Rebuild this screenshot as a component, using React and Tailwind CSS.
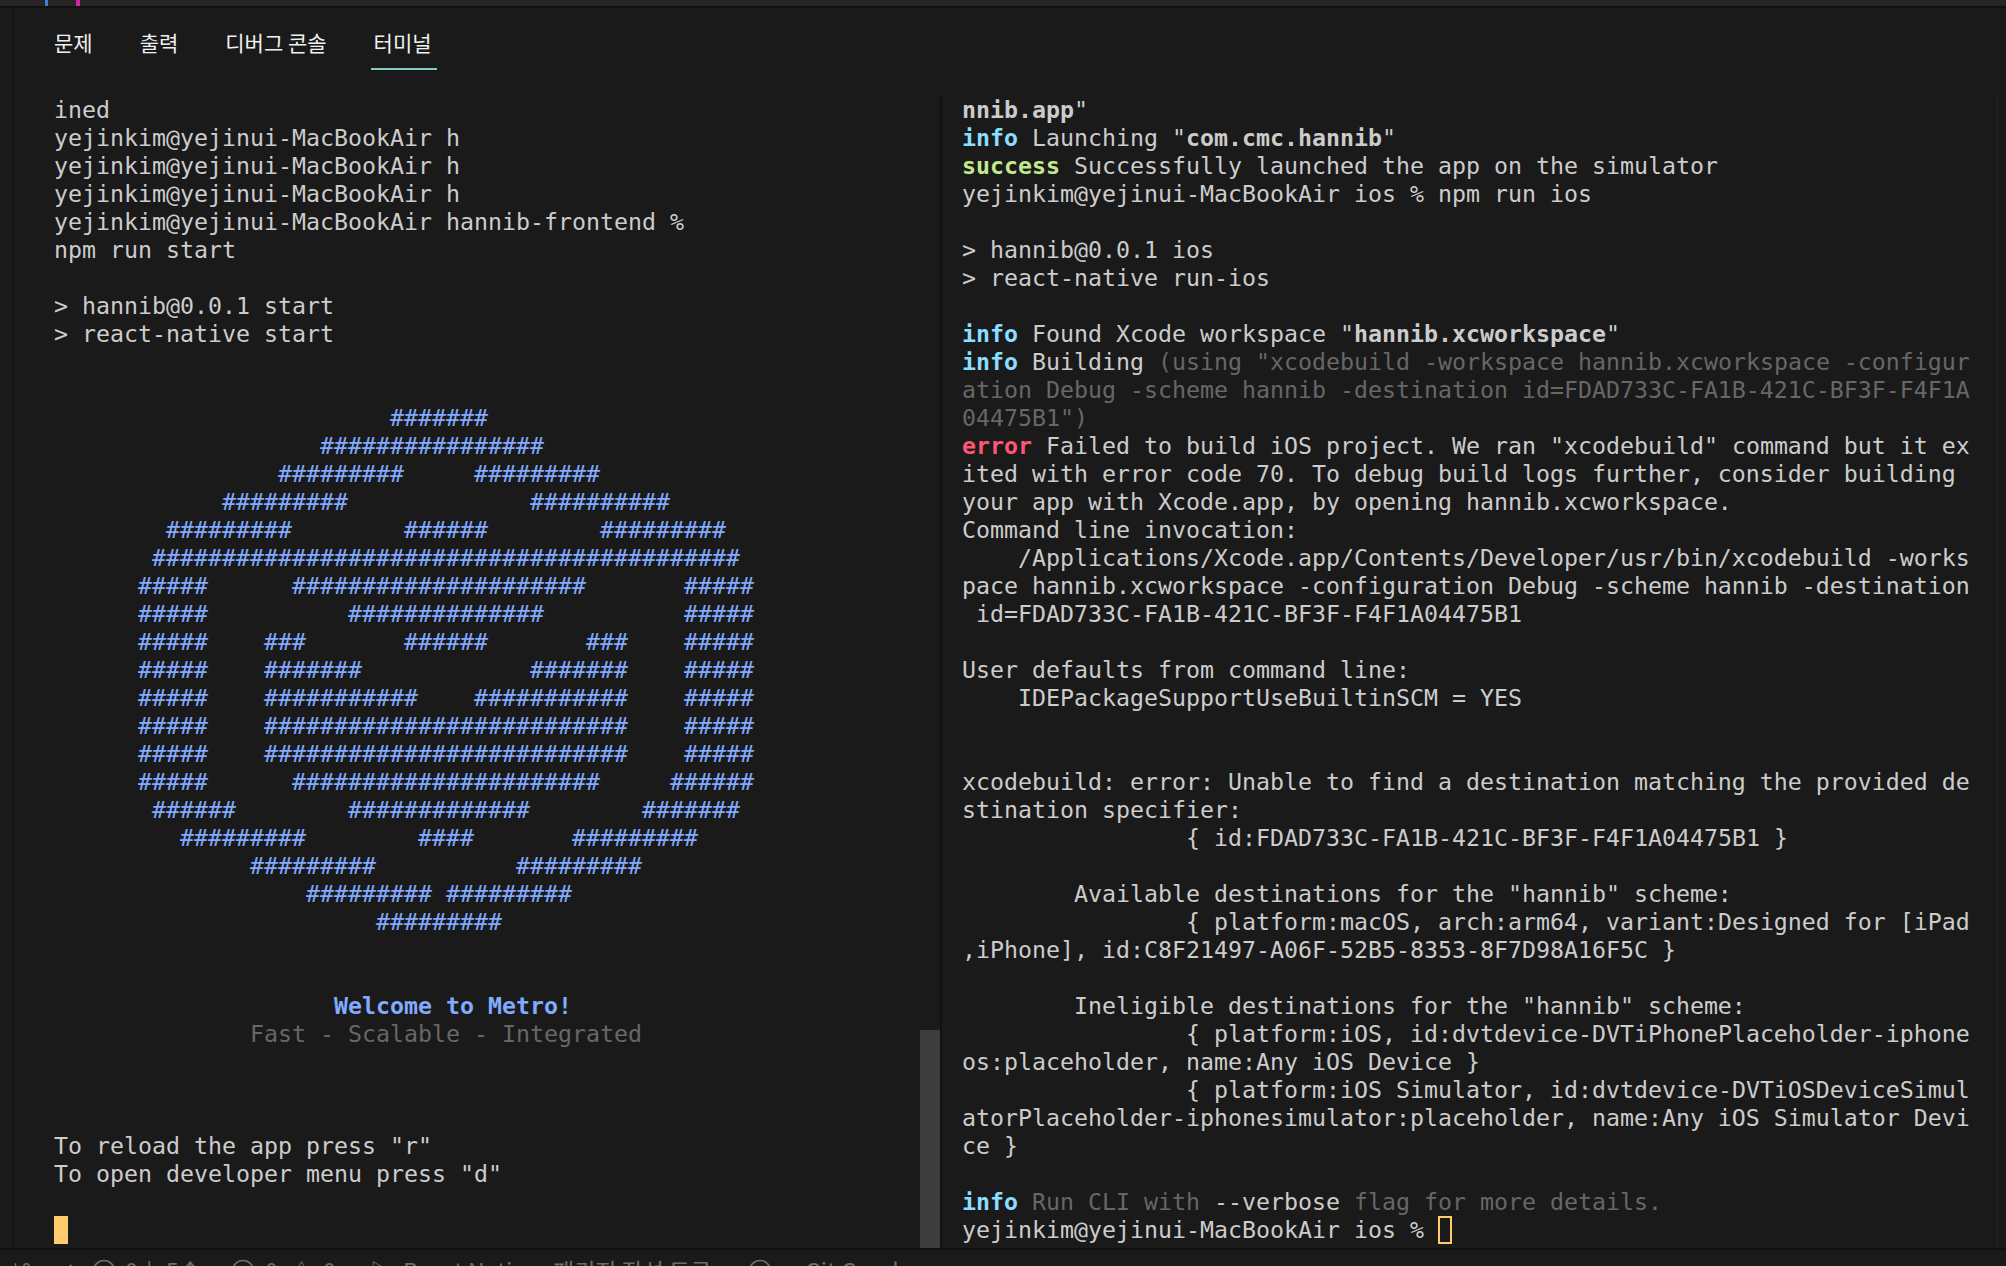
import { GitBranch } from "lucide-react";

const mono = "font-['DejaVu_Sans_Mono','Liberation_Mono',monospace]";

const metro = [
  "                        #######",
  "                   ################",
  "                #########     #########",
  "            #########             ##########",
  "        #########        ######        #########",
  "       ##########################################",
  "      #####      #####################       #####",
  "      #####          ##############          #####",
  "      #####    ###       ######       ###    #####",
  "      #####    #######            #######    #####",
  "      #####    ###########    ###########    #####",
  "      #####    ##########################    #####",
  "      #####    ##########################    #####",
  "      #####      ######################     ######",
  "       ######        #############        #######",
  "         #########        ####       #########",
  "              #########          #########",
  "                  ######### #########",
  "                       #########",
];

function B({ children }) {
  return <span className="font-bold">{children}</span>;
}
function Info() {
  return <span className="font-bold text-[#89ddff]">info</span>;
}
function Dim({ children }) {
  return <span className="text-[#676767]">{children}</span>;
}

function Tab({ children, active }) {
  return (
    <div className="relative">
      <span className="text-[#f0f0f0]">{children}</span>
      {active && <div className="absolute left-[-3px] right-[-5px] top-[41px] h-[2px] bg-[#80cbc4]" />}
    </div>
  );
}

function Ring() {
  return (
    <svg width="24" height="24" viewBox="0 0 24 24" fill="none" stroke="#6d6d6d" strokeWidth="1.6" className="mt-[1px] shrink-0">
      <circle cx="12" cy="12" r="10.5" />
    </svg>
  );
}

export default function App() {
  return (
    <div className="flex h-[1266px] w-[2006px] flex-col overflow-hidden bg-[#1a1a1a]">
      <div className="flex h-[8px] shrink-0 border-b-2 border-[#111111] bg-[#262626] pl-[45px]">
        <div className="h-[6px] w-[3px] bg-[#3b7dd8]" />
        <div className="ml-[28px] h-[6px] w-[4px] bg-[#d6249f]" />
      </div>

      <div className="flex min-h-0 flex-1">
        <div className="w-[14px] shrink-0 border-r border-[#111111]" />
        <div className="flex min-w-0 flex-1 flex-col">
          <div className="flex h-[88px] shrink-0 gap-[47px] pl-[40px] pt-[19px] font-['Noto_Sans_CJK_KR','Noto_Sans',sans-serif] text-[21px] leading-[30px]">
            <Tab>문제</Tab>
            <Tab>출력</Tab>
            <Tab>디버그 콘솔</Tab>
            <Tab active>터미널</Tab>
          </div>

          <div className={`flex min-h-0 flex-1 text-[23.25px] leading-[28px] text-[#cccccc] ${mono}`}>
            <div className="relative w-[926px] shrink-0 whitespace-pre pl-[40px]">
              <div>ined</div>
              <div>yejinkim@yejinui-MacBookAir h</div>
              <div>yejinkim@yejinui-MacBookAir h</div>
              <div>yejinkim@yejinui-MacBookAir h</div>
              <div>yejinkim@yejinui-MacBookAir hannib-frontend %</div>
              <div>npm run start</div>
              <div>&nbsp;</div>
              <div>&gt; hannib@0.0.1 start</div>
              <div>&gt; react-native start</div>
              <div>&nbsp;</div>
              <div>&nbsp;</div>
              <div className="text-[#82aaff]">
                {metro.map((row, i) => (
                  <div key={i}>{row}</div>
                ))}
              </div>
              <div>&nbsp;</div>
              <div>&nbsp;</div>
              <div className="pl-[280px] font-bold text-[#82aaff]">Welcome to Metro!</div>
              <div className="pl-[196px] text-[#676767]">Fast - Scalable - Integrated</div>
              <div>&nbsp;</div>
              <div>&nbsp;</div>
              <div>&nbsp;</div>
              <div>To reload the app press "r"</div>
              <div>To open developer menu press "d"</div>
              <div>&nbsp;</div>
              <div className="h-[28px] w-[14px] bg-[#ffcb6b]" />
              <div className="absolute bottom-0 right-0 top-[934px] w-[20px] bg-[#3c3e3c]" />
            </div>

            <div className="w-[2px] shrink-0 bg-[#111111]" />

            <div className="min-w-0 flex-1 whitespace-pre pl-[20px]">
              <div><B>nnib.app</B>"</div>
              <div><Info /> Launching "<B>com.cmc.hannib</B>"</div>
              <div><span className="font-bold text-[#c3e88d]">success</span> Successfully launched the app on the simulator</div>
              <div>yejinkim@yejinui-MacBookAir ios % npm run ios</div>
              <div>&nbsp;</div>
              <div>&gt; hannib@0.0.1 ios</div>
              <div>&gt; react-native run-ios</div>
              <div>&nbsp;</div>
              <div><Info /> Found Xcode workspace "<B>hannib.xcworkspace</B>"</div>
              <div><Info /> Building <Dim>(using "xcodebuild -workspace hannib.xcworkspace -configur</Dim></div>
              <div><Dim>ation Debug -scheme hannib -destination id=FDAD733C-FA1B-421C-BF3F-F4F1A</Dim></div>
              <div><Dim>04475B1")</Dim></div>
              <div><span className="font-bold text-[#ff5572]">error</span> Failed to build iOS project. We ran "xcodebuild" command but it ex</div>
              <div>ited with error code 70. To debug build logs further, consider building</div>
              <div>your app with Xcode.app, by opening hannib.xcworkspace.</div>
              <div>Command line invocation:</div>
              <div>    /Applications/Xcode.app/Contents/Developer/usr/bin/xcodebuild -works</div>
              <div>pace hannib.xcworkspace -configuration Debug -scheme hannib -destination</div>
              <div> id=FDAD733C-FA1B-421C-BF3F-F4F1A04475B1</div>
              <div>&nbsp;</div>
              <div>User defaults from command line:</div>
              <div>    IDEPackageSupportUseBuiltinSCM = YES</div>
              <div>&nbsp;</div>
              <div>&nbsp;</div>
              <div>xcodebuild: error: Unable to find a destination matching the provided de</div>
              <div>stination specifier:</div>
              <div>                {"{"} id:FDAD733C-FA1B-421C-BF3F-F4F1A04475B1 {"}"}</div>
              <div>&nbsp;</div>
              <div>        Available destinations for the "hannib" scheme:</div>
              <div>                {"{"} platform:macOS, arch:arm64, variant:Designed for [iPad</div>
              <div>,iPhone], id:C8F21497-A06F-52B5-8353-8F7D98A16F5C {"}"}</div>
              <div>&nbsp;</div>
              <div>        Ineligible destinations for the "hannib" scheme:</div>
              <div>                {"{"} platform:iOS, id:dvtdevice-DVTiPhonePlaceholder-iphone</div>
              <div>os:placeholder, name:Any iOS Device {"}"}</div>
              <div>                {"{"} platform:iOS Simulator, id:dvtdevice-DVTiOSDeviceSimul</div>
              <div>atorPlaceholder-iphonesimulator:placeholder, name:Any iOS Simulator Devi</div>
              <div>ce {"}"}</div>
              <div>&nbsp;</div>
              <div><Info /> <Dim>Run CLI with</Dim> --verbose <Dim>flag for more details.</Dim></div>
              <div className="flex">
                <span>yejinkim@yejinui-MacBookAir ios % </span>
                <span className="h-[28px] w-[14px] border-2 border-[#ffcb6b]" />
              </div>
            </div>
            <div className="w-[9px] shrink-0 border-l border-[#232323]" />
          </div>
        </div>
      </div>

      <div className="flex h-[18px] shrink-0 items-start overflow-hidden border-t-2 border-[#111111] pt-[8px] font-['Noto_Sans_CJK_KR','Noto_Sans',sans-serif] text-[23px] leading-[24px] text-[#6d6d6d]">
        <GitBranch size={22} strokeWidth={1.6} className="ml-[10px] mt-[3px] shrink-0" />
        <span className="ml-[6px] mt-[2px] w-[54px] overflow-hidden text-[20px]">main</span>
        <Ring />
        <span className="ml-[9px] w-[106px]">0↓ 5↑</span>
        <Ring />
        <span className="ml-[10px] w-[25px]">0</span>
        <span className="w-[33px]">△</span>
        <span className="w-[47px]">0</span>
        <span className="w-[33px]">▷</span>
        <span className="w-[150px] whitespace-nowrap">React Native</span>
        <span className="w-[195px] whitespace-nowrap">패키지 작성 도구</span>
        <Ring />
        <span className="ml-[33px] whitespace-nowrap">Git Graph</span>
      </div>
    </div>
  );
}
